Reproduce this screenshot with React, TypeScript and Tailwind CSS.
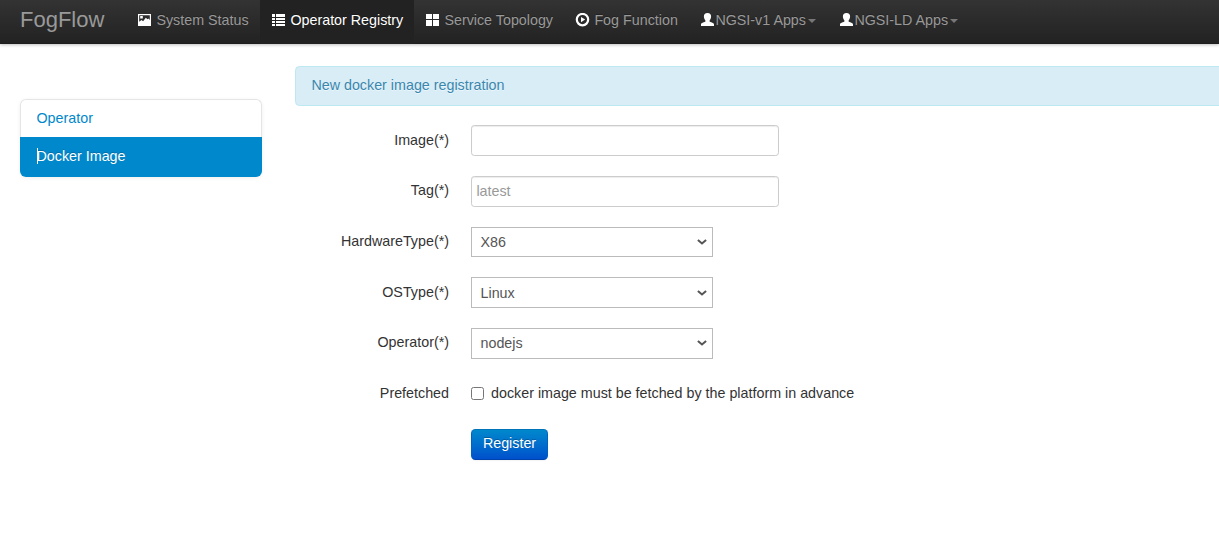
import React from 'react';

type IconName = 'picture' | 'list' | 'grid' | 'play' | 'user';

function Icon({ name }: { name: IconName }) {
  return (
    <svg className="h-[14px] w-[15.4px] shrink-0" viewBox="0 0 15.4 14" fill="#fff" shapeRendering={name === 'list' || name === 'grid' ? 'crispEdges' : 'auto'}>
      {name === 'picture' && (
        <path fillRule="evenodd" d="M1 1h13v12H1zM2.200 2.200v6.600l2.300-1.900 1.600 1.400 2.700-3.600 1.700 1.500 1-.8 1.300 1.600V2.200zM3.200 3h2.600v2.600H3.200z" />
      )}
      {name === 'list' && (
        <path d="M1 1h3v3H1zM5 1h9v3H5zM1 5h3v2H1zM5 5h9v2H5zM1 8h3v2H1zM5 8h9v2H5zM1 11h3v2H1zM5 11h9v2H5z" />
      )}
      {name === 'grid' && <path d="M1 1h6v5H1zM8 1h6v5H8zM1 7h6v6H1zM8 7h6v6H8z" />}
      {name === 'play' && (
        <>
          <circle cx="7.500" cy="6.600" r="5.700" fill="none" stroke="#fff" strokeWidth="2.200" />
          <path d="M6 4v5.200l4.200-2.600z" />
        </>
      )}
      {name === 'user' && (
        <path d="M7.500 0C5 0 3.900 1.300 3.900 3.300c0 1.600.5 3.100 1.500 4.100v1.200C4.900 9.300 1 9.800 1 11.400V13h13v-1.600c0-1.600-3.900-2.100-4.400-2.800V7.400c1-1 1.500-2.500 1.500-4.100C11.100 1.300 10 0 7.500 0z" />
      )}
    </svg>
  );
}

interface NavItem {
  label: string;
  icon: IconName;
  width: string;
  active?: boolean;
  menu?: boolean;
}

const navItems: NavItem[] = [
  { label: 'System Status', icon: 'picture', width: 'w-[134px]' },
  { label: 'Operator Registry', icon: 'list', width: 'w-[154px]', active: true },
  { label: 'Service Topology', icon: 'grid', width: 'w-[150px]' },
  { label: 'Fog Function', icon: 'play', width: 'w-[125px]' },
  { label: 'NGSI-v1 Apps', icon: 'user', width: 'w-[139px]', menu: true },
  { label: 'NGSI-LD Apps', icon: 'user', width: 'w-[142px]', menu: true },
];

function Navbar() {
  return (
    <nav className="flex h-[44px] bg-linear-to-b from-[#333] to-[#222] pl-5 shadow-[0_1px_3px_rgba(0,0,0,0.25),inset_0_-1px_0_rgba(0,0,0,0.1)]">
      <a href="#" className="w-[106px] pt-[9px] text-[22px] leading-[22px] text-[#999]">FogFlow</a>
      {navItems.map((item) => (
        <a
          key={item.label}
          href="#"
          className={`flex h-[44px] shrink-0 items-start whitespace-nowrap pt-[11px] pl-[11px] [text-shadow:0_-1px_0_rgba(0,0,0,0.25)] ${item.width} ${item.active ? 'bg-[#222] text-white' : 'text-[#999]'}`}
        >
          <span className="pt-[2px]"><Icon name={item.icon} /></span>
          <span className={item.menu ? '' : 'pl-[4px]'}>{item.label}</span>
          {item.menu && <span className="mt-[8px] ml-[2px] border-x-[4.400px] border-t-[4.400px] border-x-transparent border-t-[#777]" />}
        </a>
      ))}
    </nav>
  );
}

function Row({ label, children }: { label: string; children: React.ReactNode }) {
  return (
    <div className="mb-[19.8px] flex h-[30.8px]">
      <div className="w-[154px] pt-[5.700px] text-right text-[#333]">{label}</div>
      <div className="ml-[22px] flex">{children}</div>
    </div>
  );
}

const inputClass =
  'h-[30.8px] w-[308px] rounded-[3.3px] border border-[#ccc] bg-white px-[4.400px] text-[#555] shadow-[inset_0_1px_1px_rgba(0,0,0,0.075)] outline-none placeholder:text-[#999]';

function Select({ value }: { value: string }) {
  return (
    <div className="mt-[0.200px] grid h-[30.800px] w-[242px]">
      <select className="col-start-1 row-start-1 appearance-none border border-[#bbb] bg-white pt-[1.700px] pl-[8.5px] text-[#555] outline-none">
        <option>{value}</option>
      </select>
      <svg className="pointer-events-none col-start-1 row-start-1 mr-[6px] h-[6px] w-[10px] self-center justify-self-end" viewBox="0 0 10 6" fill="none" stroke="#555" strokeWidth="2">
        <path d="M.9.9 5 4.500 9.100.9" />
      </svg>
    </div>
  );
}

export default function App() {
  return (
    <div className="h-[553px] overflow-hidden bg-white font-['Liberation_Sans',Arial,sans-serif] text-[14.3px] leading-[19.8px]">
      <Navbar />
      <div className="flex pl-5">
        <aside className="mt-[55px] h-[78px] w-[242px] shrink-0 rounded-[6px] shadow-[0_1px_4px_rgba(0,0,0,0.065)]">
          <a href="#" className="block h-[38px] rounded-t-[6px] border border-b-0 border-[#e5e5e5] pt-[9px] pl-[15.5px] text-[#0088cc]">Operator</a>
          <a href="#" className="flex h-[40px] rounded-b-[6px] bg-[#0088cc] pt-[10px] pl-[16.5px] text-white [text-shadow:0_-1px_0_rgba(0,0,0,0.2)]">
            <span className="-mr-px mt-px h-[16px] w-px bg-white" />
            <span>Docker Image</span>
          </a>
        </aside>
        <main className="ml-[33px] w-[940px] shrink-0 pt-[22px]">
          <div className="h-[40px] rounded-[4.400px] border border-[#bce8f1] bg-[#d9edf7] pt-[9px] pl-[15.4px] text-[#3a87ad] [text-shadow:0_1px_0_rgba(255,255,255,0.5)]">New docker image registration</div>
          <form className="mt-[19.2px]" onSubmit={(e) => e.preventDefault()}>
            <Row label="Image(*)"><input type="text" className={inputClass} /></Row>
            <Row label="Tag(*)"><input type="text" placeholder="latest" className={inputClass} /></Row>
            <Row label="HardwareType(*)"><Select value="X86" /></Row>
            <Row label="OSType(*)"><Select value="Linux" /></Row>
            <Row label="Operator(*)"><Select value="nodejs" /></Row>
            <Row label="Prefetched">
              <label className="flex pt-[5.5px] text-[#333]">
                <input type="checkbox" className="mt-[3px] mr-[7px] h-[13px] w-[13px] appearance-none rounded-[2.5px] border border-[#767676] bg-white" />
                docker image must be fetched by the platform in advance
              </label>
            </Row>
            <button className="ml-[176px] h-[31px] w-[77px] rounded-[4.400px] border border-[#0062c0] border-t-[#0074b8] border-b-[#0043aa] bg-linear-to-b from-[#0088cc] to-[#0050cc] text-white shadow-[0_1px_2px_rgba(0,0,0,0.05)] [text-shadow:0_-1px_0_rgba(0,0,0,0.25)]">
              Register
            </button>
          </form>
        </main>
      </div>
    </div>
  );
}
